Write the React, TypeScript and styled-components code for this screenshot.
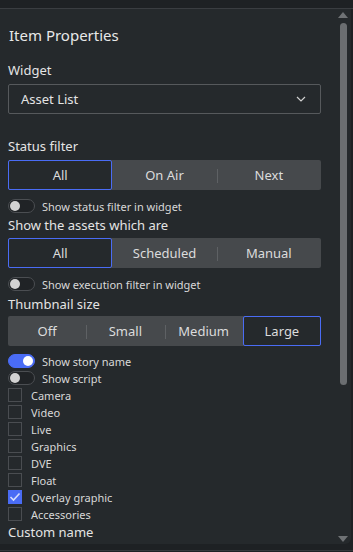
import styled, { createGlobalStyle } from "styled-components";
import { useState } from "react";

const GlobalStyle = createGlobalStyle`
  html, body {
    margin: 0;
    padding: 0;
    background: #1e2124;
    font-family: "Noto Sans", "Open Sans", sans-serif;
  }
`;

const Shell = styled.div`
  width: 353px;
  height: 552px;
  display: flex;
  flex-direction: column;
  background: #1e2124;
  overflow: hidden;
`;
const TopBar = styled.div`
  height: 8px;
  border-bottom: 1px solid #3a3d41;
  flex-shrink: 0;
`;
const BottomBar = styled.div`
  height: 6px;
  border-bottom: 1px solid #35383b;
  flex-shrink: 0;
  margin-bottom: 1px;
`;
const Panel = styled.div`
  flex: 1;
  display: flex;
  margin-right: 2px;
  background: #25292c;
  border-bottom-right-radius: 6px;
  min-height: 0;
`;
const Content = styled.div`
  width: 313px;
  padding-left: 8px;
  padding-right: 17px;
  display: flex;
  flex-direction: column;
  overflow: hidden;
`;
const ScrollCol = styled.div`
  width: 10px;
  margin-right: 3px;
  padding: 3px 0 2px;
  display: flex;
  flex-direction: column;
  align-items: center;
`;
const Arrow = styled.div<{ $down?: boolean }>`
  width: 0;
  height: 0;
  border-left: 5px solid transparent;
  border-right: 5px solid transparent;
  ${(p) =>
    p.$down
      ? "border-top: 6px solid #6f7275; margin-top: auto;"
      : "border-bottom: 6px solid #6f7275;"}
`;
const Thumb = styled.div`
  width: 7px;
  height: 362px;
  margin-top: 5px;
  border-radius: 4px;
  background: #6b6e71;
`;

const Title = styled.div`
  margin-top: 16px;
  padding-left: 1px;
  font-size: 15px;
  line-height: 20px;
  color: #e8e8e8;
`;
const Label = styled.div<{ $mt: number }>`
  margin-top: ${(p) => p.$mt}px;
  font-size: 13px;
  line-height: 18px;
  color: #e4e4e4;
`;
const Select = styled.div<{ $mt: number }>`
  margin-top: ${(p) => p.$mt}px;
  height: 28px;
  border: 1px solid #56595c;
  border-radius: 2px;
  display: flex;
  align-items: center;
  justify-content: space-between;
  padding: 0 14px 0 12px;
  font-size: 13px;
  color: #e4e4e4;
`;
const Segmented = styled.div<{ $mt: number }>`
  margin-top: ${(p) => p.$mt}px;
  height: 30px;
  display: flex;
  background: #46494c;
  border-radius: 2px;
`;
const Seg = styled.div<{ $active?: boolean; $sep?: boolean }>`
  flex: 1;
  position: relative;
  display: flex;
  align-items: center;
  justify-content: center;
  font-size: 13px;
  color: #dcdcdc;
  border-radius: 2px;
  box-sizing: border-box;
  border: 1px solid ${(p) => (p.$active ? "#4a6cf5" : "transparent")};
  background: ${(p) => (p.$active ? "#25292c" : "transparent")};
  &::before {
    content: "";
    display: ${(p) => (p.$sep ? "block" : "none")};
    position: absolute;
    left: -1px;
    top: 8px;
    width: 1px;
    height: 14px;
    background: #5e6164;
  }
`;
const ToggleRow = styled.div<{ $mt: number }>`
  margin-top: ${(p) => p.$mt}px;
  height: 14px;
  display: flex;
  align-items: center;
  gap: 7px;
  font-size: 11px;
  color: #d8d8d8;
`;
const Switch = styled.div<{ $on?: boolean }>`
  width: 27px;
  height: 14px;
  box-sizing: border-box;
  border-radius: 7px;
  border: 1px solid ${(p) => (p.$on ? "#4a6cf5" : "#4b4e52")};
  background: ${(p) => (p.$on ? "#4a6cf5" : "#202326")};
  display: flex;
  align-items: center;
  justify-content: ${(p) => (p.$on ? "flex-end" : "flex-start")};
  padding: 0 1px;
  &::after {
    content: "";
    width: 10px;
    height: 10px;
    border-radius: 50%;
    background: ${(p) => (p.$on ? "#ffffff" : "#d2d2d2")};
  }
`;
const CheckList = styled.div`
  margin-top: 3px;
  display: flex;
  flex-direction: column;
  gap: 3px;
`;
const CheckRow = styled.div`
  height: 14px;
  display: flex;
  align-items: center;
  gap: 9px;
  font-size: 11px;
  color: #d8d8d8;
`;
const Box = styled.div<{ $on?: boolean }>`
  width: 14px;
  height: 14px;
  box-sizing: border-box;
  border: 1px solid ${(p) => (p.$on ? "#4a6cf5" : "#4a4d51")};
  background: ${(p) => (p.$on ? "#4a6cf5" : "transparent")};
  display: flex;
  align-items: center;
  justify-content: center;
`;

type SegItem = { label: string };

const SegControl = ({ items, active, mt }: { items: SegItem[]; active: number; mt: number }) => (
  <Segmented $mt={mt}>
    {items.map((it, i) => (
      <Seg key={it.label} $active={i === active} $sep={i > 0 && i !== active && i - 1 !== active}>
        {it.label}
      </Seg>
    ))}
  </Segmented>
);

const assetTypes = ["Camera", "Video", "Live", "Graphics", "DVE", "Float", "Overlay graphic", "Accessories"];

const App = () => {
  const [checked] = useState<string[]>(["Overlay graphic"]);

  return (
    <>
      <GlobalStyle />
      <Shell>
        <TopBar />
        <Panel>
          <Content>
            <Title>Item Properties</Title>
            <Label $mt={16}>Widget</Label>
            <Select $mt={5}>
              <span>Asset List</span>
              <svg width="10" height="6" viewBox="0 0 10 6">
                <polyline points="1,1 5,5 9,1" fill="none" stroke="#d0d0d0" strokeWidth="1.2" />
              </svg>
            </Select>
            <Label $mt={23}>Status filter</Label>
            <SegControl mt={5} active={0} items={[{ label: "All" }, { label: "On Air" }, { label: "Next" }]} />
            <ToggleRow $mt={9}>
              <Switch />
              Show status filter in widget
            </ToggleRow>
            <Label $mt={3}>Show the assets which are</Label>
            <SegControl mt={4} active={0} items={[{ label: "All" }, { label: "Scheduled" }, { label: "Manual" }]} />
            <ToggleRow $mt={9}>
              <Switch />
              Show execution filter in widget
            </ToggleRow>
            <Label $mt={4}>Thumbnail size</Label>
            <SegControl
              mt={3}
              active={3}
              items={[{ label: "Off" }, { label: "Small" }, { label: "Medium" }, { label: "Large" }]}
            />
            <ToggleRow $mt={8}>
              <Switch $on />
              Show story name
            </ToggleRow>
            <ToggleRow $mt={3}>
              <Switch />
              Show script
            </ToggleRow>
            <CheckList>
              {assetTypes.map((t) => {
                const on = checked.includes(t);
                return (
                  <CheckRow key={t}>
                    <Box $on={on}>
                      {on && (
                        <svg width="12" height="10" viewBox="0 0 12 10">
                          <polyline points="1.5,5 4.5,8 10.5,1.5" fill="none" stroke="#d6defc" strokeWidth="1.6" />
                        </svg>
                      )}
                    </Box>
                    {t}
                  </CheckRow>
                );
              })}
            </CheckList>
            <Label $mt={2}>Custom name</Label>
          </Content>
          <ScrollCol>
            <Arrow />
            <Thumb />
            <Arrow $down />
          </ScrollCol>
        </Panel>
        <BottomBar />
      </Shell>
    </>
  );
};

export default App;
